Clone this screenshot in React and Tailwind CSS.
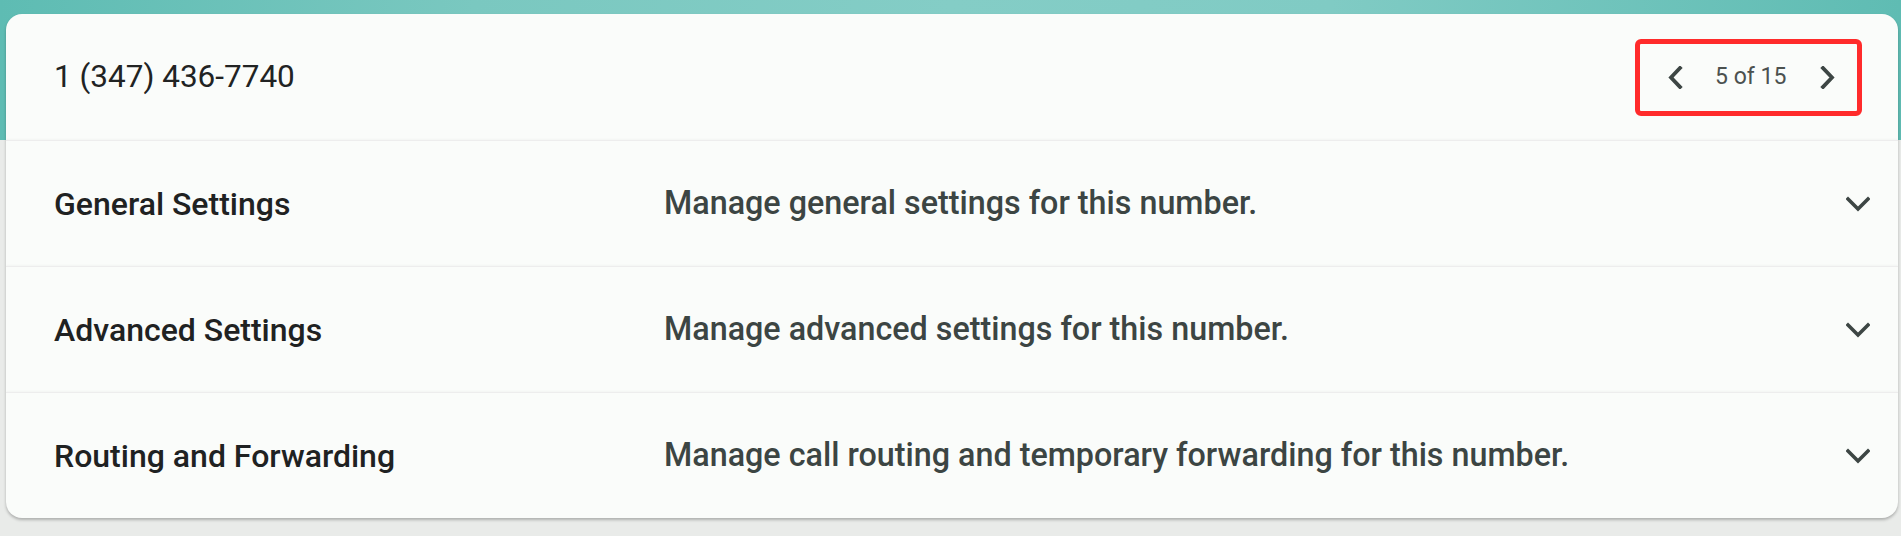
import React from "react";

// Number settings panel: header with pager, then collapsible setting rows
const sections = [
  { title: "General Settings", desc: "Manage general settings for this number." },
  { title: "Advanced Settings", desc: "Manage advanced settings for this number." },
  {
    title: "Routing and Forwarding",
    desc: "Manage call routing and temporary forwarding for this number.",
  },
];

function ChevronDown() {
  return (
    <svg width="24" height="16" viewBox="0 0 24 16" fill="none">
      <path d="M2 3l10 10L22 3" stroke="#3d4644" strokeWidth="3.6" strokeLinecap="square" />
    </svg>
  );
}

function ChevronSide({ dir }) {
  const d = dir === "left" ? "M13 2L4 11.5l9 9.5" : "M3 2l9 9.5L3 21";
  return (
    <svg width="16" height="23" viewBox="0 0 16 23" fill="none">
      <path d={d} stroke="#3d4644" strokeWidth="3.8" strokeLinecap="square" />
    </svg>
  );
}

export default function App() {
  return (
    <div
      className="min-h-[536px] bg-[#e9ebe9] bg-[linear-gradient(90deg,#5ebcb3_0%,#7ac8c0_25%,#84cdc6_50%,#80cbc4_70%,#5fbcb3_100%)] bg-no-repeat bg-[length:100%_140px] pt-[14px] pl-[6px] pr-[3px] pb-[16px]"
      style={{ fontFamily: "Roboto, 'Noto Sans', sans-serif" }}
    >
      <div className="bg-[#fafcfa] rounded-[16px] overflow-hidden shadow-[0_2px_3px_rgba(0,0,0,0.25)]">
        {/* header */}
        <div className="h-[126px] flex items-center justify-between pl-[48px] pr-[36px]">
          <span className="text-[31.5px] text-[#212323]">1 (347) 436-7740</span>
          <div className="w-[227px] h-[77px] border-[5px] border-[#ff2b2b] rounded-[6px] flex items-center pl-[27px]">
            <ChevronSide dir="left" />
            <span className="ml-[32px] text-[23px] text-[#4b514f]">5 of 15</span>
            <span className="ml-[34px]">
              <ChevronSide dir="right" />
            </span>
          </div>
        </div>

        {sections.map((s) => (
          <div
            key={s.title}
            className="h-[126px] flex items-center border-t border-[#ededed] shadow-[0_-1px_2px_rgba(0,0,0,0.03)] pl-[48px] pr-[28px]"
          >
            <span className="w-[610px] text-[32px] font-medium text-[#1f2222]">{s.title}</span>
            <span className="flex-1 text-[32.3px] font-medium text-[#3c4543]">{s.desc}</span>
            <ChevronDown />
          </div>
        ))}
      </div>
    </div>
  );
}
